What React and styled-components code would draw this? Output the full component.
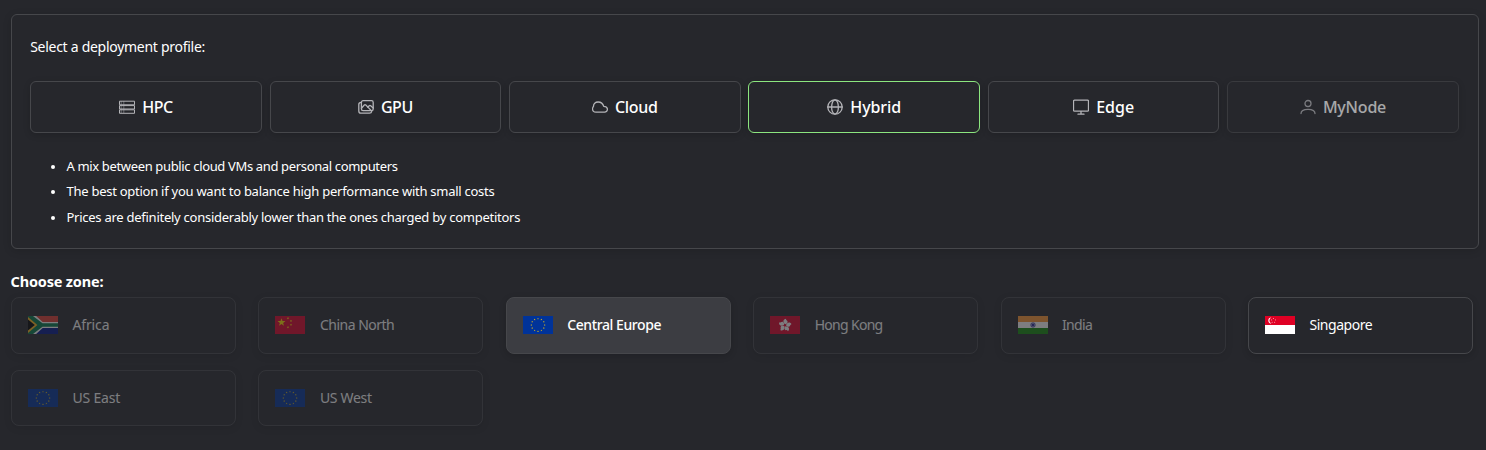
import React from "react";
import styled, { createGlobalStyle } from "styled-components";

const Global = createGlobalStyle`
  * { box-sizing: border-box; }
  body {
    margin: 0;
    background: #26272c;
    color: #fff;
    font-family: "Noto Sans", "Open Sans", sans-serif;
  }
`;

const Page = styled.main`
  height: 450px;
  padding: 14px 7px 0 11px;
  overflow: hidden;
`;

const Panel = styled.section`
  height: 235px;
  padding: 21px 19.2px 0 18.2px;
  border: 1px solid #46474b;
  border-radius: 6px;
  box-shadow: 0 2px 8px rgba(0, 0, 0, 0.14);
`;

const Prompt = styled.p`
  margin: 0;
  font-size: 14px;
  line-height: 22px;
  letter-spacing: ${(p) => p.$track}px;
`;

const Profiles = styled.div`
  display: grid;
  grid-template-columns: repeat(6, 1fr);
  gap: 7.8px;
  margin-top: 23px;
`;

const ProfileButton = styled.button`
  display: flex;
  align-items: center;
  justify-content: center;
  gap: 7px;
  height: 52px;
  padding: 0;
  border: 1px solid ${(p) => (p.$selected ? "#8ce67f" : "#46474b")};
  border-radius: 6px;
  background: transparent;
  box-shadow: 0 2px 7px rgba(0, 0, 0, 0.16);
  color: #fff;
  font: 500 16px/24px "Noto Sans", sans-serif;
  opacity: ${(p) => (p.disabled ? 0.6 : 1)};
`;

const ProfileName = styled.span`
  letter-spacing: ${(p) => p.$track}px;
`;

const Icon = styled.svg`
  width: 16px;
  height: 16px;
  flex: none;
  fill: none;
  stroke: #b4b4b8;
  stroke-width: 1.3;
  stroke-linecap: round;
  stroke-linejoin: round;
`;

const Facts = styled.ul`
  margin: 21px 0 0;
  padding-left: 36.3px;
  font-size: 13px;
  line-height: 25.3px;
`;

const Fact = styled.li`
  letter-spacing: ${(p) => p.$track}px;

  &::marker {
    font-size: 11px;
  }
`;

const Heading = styled.h2`
  margin: 21px 0 5px -0.5px;
  font-size: 14.5px;
  font-weight: 700;
  line-height: 22px;
  letter-spacing: ${(p) => p.$track}px;
`;

const Zones = styled.div`
  display: grid;
  grid-template-columns: repeat(6, 225px);
  column-gap: 22.4px;
  row-gap: 16.3px;
`;

const Zone = styled.button`
  display: flex;
  align-items: center;
  gap: 14.5px;
  height: 56.5px;
  padding: 0 16px;
  border: 1px solid #46474b;
  border-radius: 8px;
  background: ${(p) => (p.$selected ? "#3c3d42" : "transparent")};
  box-shadow: 0 2px 7px rgba(0, 0, 0, 0.16);
  color: #fff;
  font: ${(p) => (p.$selected ? 500 : 400)} 14px/22px "Noto Sans", sans-serif;
  opacity: ${(p) => (p.disabled ? 0.4 : 1)};
`;

const ZoneName = styled.span`
  letter-spacing: ${(p) => p.$track}px;
`;

const Flag = styled.svg`
  width: 30px;
  height: 18px;
  flex: none;
`;

const starPoints = (cx, cy, r, turn = -90) =>
  Array.from({ length: 10 }, (_, i) => {
    const a = ((turn + i * 36) * Math.PI) / 180;
    const d = i % 2 ? r * 0.4 : r;
    return `${(cx + d * Math.cos(a)).toFixed(2)},${(cy + d * Math.sin(a)).toFixed(2)}`;
  }).join(" ");

const icons = {
  hpc: (
    <g strokeWidth="1" strokeLinejoin="miter" strokeLinecap="butt">
      <path d="M.5 2.2h15v3.6H.5zM.5 6.6h15v3.4H.5zM.5 10.8h15v3.5H.5z" />
      <path strokeWidth=".8" d="M4.8 2v12M2.2 2v12" opacity=".6" />
    </g>
  ),
  gpu: (
    <>
      <rect x="3.4" y="1.7" width="11.8" height="10" rx="1.7" />
      <path d="M3.2 3.4C1.6 3.4.8 4.2.8 5.6v6.4c0 1.4.8 2.2 2.2 2.2h8.5c1.2 0 2-.6 2.2-1.8" />
      <path d="m3.5 9.2 2.8-3.2c.5-.5 1-.5 1.5 0l5.3 5.4M9.7 8.2l1.5-1.4c.5-.4 1-.4 1.5 0l2.5 2.2" />
    </>
  ),
  cloud: (
    <path d="M4 13.2h8.5A2.9 2.9 0 0 0 15.4 10c-.2-1.7-1.7-2.7-3.7-2.7C11 4.8 9 3 6.1 3 3.3 3 1.5 4.8 1.5 7.2c0 .5-.7 1-.9 2C.2 11.6 1.6 13.2 4 13.2Z" />
  ),
  globe: (
    <>
      <circle cx="8" cy="8" r="7.2" />
      <ellipse cx="8" cy="8" rx="3.4" ry="7.2" />
      <path d="M.8 8h14.4" />
    </>
  ),
  monitor: <path d="M1.5 1.2h13a1 1 0 0 1 1 1v9a1 1 0 0 1-1 1h-13a1 1 0 0 1-1-1v-9a1 1 0 0 1 1-1ZM8 12.2v2.8M5 15.2h6" />,
  user: (
    <>
      <circle cx="8" cy="4.5" r="3" />
      <path d="M1 14.6c0-3.1 2.5-4.2 7-4.2s7 1.1 7 4.2" />
    </>
  ),
};

const EuFlag = () => (
  <Flag viewBox="0 0 30 18">
    <path fill="#003399" d="M0 0h30v18H0z" />
    {Array.from({ length: 12 }, (_, i) => (
      <polygon
        key={i}
        fill="#ffcc00"
        points={starPoints(15 + 6.7 * Math.sin((i * Math.PI) / 6), 9 - 6.3 * Math.cos((i * Math.PI) / 6), 0.95)}
      />
    ))}
  </Flag>
);

const flags = {
  eu: <EuFlag />,
  africa: (
    <Flag viewBox="0 0 30 18">
      <path fill="#e03c31" d="M0 0h30v9H0z" />
      <path fill="#001489" d="M0 9h30v9H0z" />
      <path fill="none" stroke="#fff" strokeWidth="6" d="m1.5-2 12 11-12 11M13 9h17" />
      <path fill="#007749" d="M0 0h5l9.5 7.2H30v3.6H14.5L5 18H0z" />
      <path fill="#ffb81c" d="M0 1v16l9.4-8z" />
      <path fill="#000" d="M0 3.6v10.8L6.8 9z" />
    </Flag>
  ),
  china: (
    <Flag viewBox="0 0 30 18">
      <path fill="#de0029" d="M0 0h30v18H0z" />
      <g fill="#ffde00">
        <polygon points={starPoints(6.5, 6.4, 4.2)} />
        <polygon points={starPoints(13, 2.3, 1.3, 20)} />
        <polygon points={starPoints(16, 5, 1.3, 50)} />
        <polygon points={starPoints(16, 8.7, 1.3)} />
        <polygon points={starPoints(13, 11.3, 1.3, 20)} />
      </g>
    </Flag>
  ),
  hongkong: (
    <Flag viewBox="0 0 30 18">
      <path fill="#de0029" d="M0 0h30v18H0z" />
      <g fill="#fff" transform="translate(15 9.3)">
        {[8, 80, 152, 224, 296].map((a) => (
          <path key={a} transform={`rotate(${a})`} d="M0-1C-3-2.6-2.7-6 .2-6.6c-.7 1.2 2.4 1.7 1.9 3.5C1.8-1.9.8-1.4 0-1Z" />
        ))}
      </g>
    </Flag>
  ),
  india: (
    <Flag viewBox="0 0 30 18">
      <path fill="#ff9933" d="M0 0h30v6H0z" />
      <path fill="#fff" d="M0 6h30v6H0z" />
      <path fill="#128807" d="M0 12h30v6H0z" />
      <circle cx="15" cy="9" r="2.3" fill="#9a9ad0" stroke="#000080" strokeWidth=".5" />
      <circle cx="15" cy="9" r="1" fill="#000080" />
    </Flag>
  ),
  singapore: (
    <Flag viewBox="0 0 30 18">
      <path fill="#fff" d="M0 0h30v18H0z" />
      <path fill="#df0024" d="M0 0h30v9H0z" />
      <path fill="#fff" d="M6.4 1.4a3.1 3.1 0 1 0 0 6.2 3.4 3.4 0 0 1 0-6.2Z" />
      <g fill="#fff">
        {[[8.4, 2.5], [10.4, 4], [9.7, 6.2], [7.1, 6.2], [6.5, 4]].map(([x, y]) => (
          <polygon key={`${x}-${y}`} points={starPoints(x, y, 0.75)} />
        ))}
      </g>
    </Flag>
  ),
};

const profiles = [
  { name: "HPC", icon: "hpc", track: -0.4 },
  { name: "GPU", icon: "gpu", track: -0.4 },
  { name: "Cloud", icon: "cloud", track: -0.3 },
  { name: "Hybrid", icon: "globe", track: -0.1, selected: true },
  { name: "Edge", icon: "monitor", track: 0 },
  { name: "MyNode", icon: "user", track: -0.2, disabled: true },
];

const facts = [
  { text: "A mix between public cloud VMs and personal computers", track: -0.35 },
  { text: "The best option if you want to balance high performance with small costs", track: -0.26 },
  { text: "Prices are definitely considerably lower than the ones charged by competitors", track: -0.26 },
];

const zones = [
  { name: "Africa", flag: "africa", track: -0.15, disabled: true },
  { name: "China North", flag: "china", track: -0.5, disabled: true },
  { name: "Central Europe", flag: "eu", track: -0.42, selected: true },
  { name: "Hong Kong", flag: "hongkong", track: -0.7, disabled: true },
  { name: "India", flag: "india", track: -0.7, disabled: true },
  { name: "Singapore", flag: "singapore", track: -0.45 },
  { name: "US East", flag: "eu", track: -0.2, disabled: true },
  { name: "US West", flag: "eu", track: -0.3, disabled: true },
];

export default function App() {
  return (
    <Page>
      <Global />
      <Panel>
        <Prompt $track={-0.28}>Select a deployment profile:</Prompt>
        <Profiles>
          {profiles.map((p) => (
            <ProfileButton key={p.name} $selected={p.selected} disabled={p.disabled}>
              <Icon viewBox="0 0 16 16">{icons[p.icon]}</Icon>
              <ProfileName $track={p.track}>{p.name}</ProfileName>
            </ProfileButton>
          ))}
        </Profiles>
        <Facts>
          {facts.map((f) => (
            <Fact key={f.text} $track={f.track}>{f.text}</Fact>
          ))}
        </Facts>
      </Panel>
      <Heading $track={-0.17}>Choose zone:</Heading>
      <Zones>
        {zones.map((z) => (
          <Zone key={z.name} $selected={z.selected} disabled={z.disabled}>
            {flags[z.flag]}
            <ZoneName $track={z.track}>{z.name}</ZoneName>
          </Zone>
        ))}
      </Zones>
    </Page>
  );
}
